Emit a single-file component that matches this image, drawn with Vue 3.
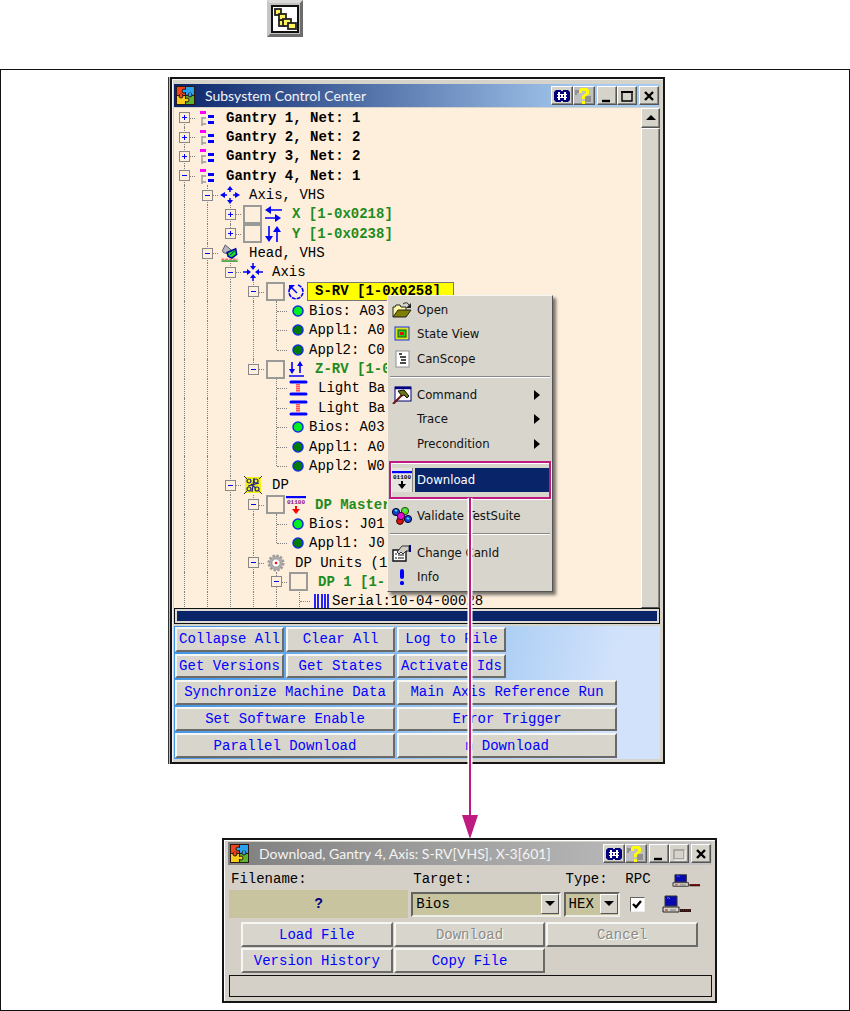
<script setup>
import { ref } from 'vue'

const rows = [
  { g: '', node: '+', icon: 'net', text: 'Gantry 1, Net: 1', kind: 'bold', edge: 'first' },
  { g: '', node: '+', icon: 'net', text: 'Gantry 2, Net: 2', kind: 'bold' },
  { g: '', node: '+', icon: 'net', text: 'Gantry 3, Net: 2', kind: 'bold' },
  { g: '', node: '-', icon: 'net', text: 'Gantry 4, Net: 1', kind: 'bold' },
  { g: '|', node: '-', icon: 'axes', text: 'Axis, VHS' },
  { g: '||', node: '+', check: true, icon: 'leftright', text: 'X [1-0x0218]', kind: 'green' },
  { g: '||', node: '+', check: true, icon: 'updown', text: 'Y [1-0x0238]', kind: 'green', edge: 'last' },
  { g: '|', node: '-', icon: 'head', text: 'Head, VHS' },
  { g: '||', node: '-', icon: 'converge', text: 'Axis' },
  { g: '|||', node: '-', check: true, icon: 'rotate', text: 'S-RV [1-0x0258]', kind: 'picked' },
  { g: '||||', node: 't', icon: 'on', text: 'Bios: A03', tight: true },
  { g: '||||', node: 't', icon: 'off', text: 'Appl1: A0', tight: true },
  { g: '||||', node: 't', icon: 'off', text: 'Appl2: C0', tight: true, edge: 'last' },
  { g: '|||', node: '-', check: true, icon: 'zaxis', text: 'Z-RV [1-0', kind: 'green', edge: 'last' },
  { g: '||| ', node: 't', icon: 'barrier', text: 'Light Ba' },
  { g: '||| ', node: 't', icon: 'barrier', text: 'Light Ba' },
  { g: '||| ', node: 't', icon: 'on', text: 'Bios: A03', tight: true },
  { g: '||| ', node: 't', icon: 'off', text: 'Appl1: A0', tight: true },
  { g: '||| ', node: 't', icon: 'off', text: 'Appl2: W0', tight: true, edge: 'last' },
  { g: '||', node: '-', icon: 'dp', text: 'DP' },
  { g: '|||', node: '-', check: true, icon: 'load', text: 'DP Master', kind: 'green' },
  { g: '||||', node: 't', icon: 'on', text: 'Bios: J01', tight: true },
  { g: '||||', node: 't', icon: 'off', text: 'Appl1: J0', tight: true, edge: 'last' },
  { g: '|||', node: '-', icon: 'gear', text: 'DP Units (1' },
  { g: '||||', node: '-', check: true, text: 'DP 1 [1-', kind: 'green' },
  { g: '|||||', node: 't', icon: 'serial', text: 'Serial:10-04-00028', tight: true }
]

const menu = [
  { icon: 'open', text: 'Open' },
  { icon: 'state', text: 'State View' },
  { icon: 'scope', text: 'CanScope' },
  { sep: true },
  { icon: 'hammer', text: 'Command', sub: true },
  { text: 'Trace', sub: true },
  { text: 'Precondition', sub: true },
  { sep: true },
  { icon: 'loadblack', text: 'Download', active: true },
  { sep: true },
  { icon: 'balls', text: 'Validate TestSuite' },
  { sep: true },
  { icon: 'props', text: 'Change CanId' },
  { icon: 'info', text: 'Info' }
]

const actions = [
  { text: 'Collapse All', place: 'c1' },
  { text: 'Clear All', place: 'c2' },
  { text: 'Log to File', place: 'c3' },
  { text: 'Get Versions', place: 'c1' },
  { text: 'Get States', place: 'c2' },
  { text: 'Activate Ids', place: 'c3' },
  { text: 'Synchronize Machine Data', place: 'left' },
  { text: 'Main Axis Reference Run', place: 'right' },
  { text: 'Set Software Enable', place: 'left' },
  { text: 'Error Trigger', place: 'right' },
  { text: 'Parallel Download', place: 'left' },
  { text: 'n Download', place: 'right' }
]

const target = ref('Bios')
const fileType = ref('HEX')
const rpc = ref(true)
</script>

<template>
  <svg class="defs" aria-hidden="true">
    <symbol id="logo" viewBox="0 0 19 19">
      <rect width="19" height="19" fill="#2a1a12" />
      <rect x="1" y="1" width="8" height="8" fill="#f4431c" />
      <rect x="10" y="1" width="8" height="8" fill="#2aa0f0" />
      <rect x="1" y="10" width="8" height="8" fill="#f7cb1a" />
      <rect x="10" y="10" width="8" height="8" fill="#5cb531" />
      <circle cx="8" cy="5" r="2" fill="#2aa0f0" stroke="#2a1a12" />
      <circle cx="14" cy="9" r="2" fill="#2aa0f0" stroke="#2a1a12" />
      <circle cx="11" cy="14" r="2" fill="#f7cb1a" stroke="#2a1a12" />
      <circle cx="5" cy="10" r="2" fill="#f4431c" stroke="#2a1a12" />
      <path d="M9 4h2v2H9z" fill="#2aa0f0" />
      <path d="M13 7h2v2h-2z" fill="#2aa0f0" />
      <path d="M8 13h2v2H8z" fill="#f7cb1a" />
      <path d="M4 8h2v2H4z" fill="#f4431c" />
    </symbol>
    <symbol id="glasses" viewBox="0 0 18 14">
      <path d="M3 1h5v1h2V1h5l2 2v8l-2 2h-5v-1H8v1H3l-2-2V3z" fill="#00007c" />
      <path d="M5 3h2v8H5zM11 3h2v8h-2zM4 5h4v1H4zM4 8h4v1H4zM10 5h4v1h-4zM10 8h4v1h-4zM8 5h2v4H8z" fill="#fff" />
    </symbol>
    <symbol id="help" viewBox="0 0 18 16">
      <path d="M0 2h4v3H2v2H0zM10 8h6v6h-6z" fill="#909090" />
      <path d="M4 4V2l2-2h6l2 2v4l-4 3v2H7V8l4-3V3H7v2H4zM7 13h3v3H7z" fill="#ffff00" />
    </symbol>
    <symbol id="net" viewBox="0 0 20 18">
      <path d="M5 8v9M5 9h4M5 15h4" stroke="#999" stroke-width="1.4" fill="none" />
      <rect x="3" y="2" width="6" height="3" fill="#ff00ff" />
      <path d="M11 6h6v3h-6zM11 12h6v3h-6z" fill="#0000ff" />
    </symbol>
    <symbol id="axes" viewBox="0 0 20 18">
      <path d="M10 3v3M10 12v3M4 9h3M13 9h3" stroke="#0000ff" stroke-width="1.5" />
      <path d="M10 0l3 4H7zM10 18l3-4H7zM0 9l5-3v6zM20 9l-5-3v6z" fill="#0000ff" />
    </symbol>
    <symbol id="converge" viewBox="0 0 20 18">
      <path d="M10 0v3M10 15v3M0 9h4M16 9h4" stroke="#0000ff" stroke-width="1.5" />
      <path d="M10 7l3-4H7zM10 11l3 4H7zM8 9L4 6v6zM12 9l4-3v6z" fill="#0000ff" />
    </symbol>
    <symbol id="leftright" viewBox="0 0 20 18">
      <path d="M5 5h14M2 13h13" stroke="#0000ff" stroke-width="1.6" />
      <path d="M2 5l6-4v8zM18 13l-6-4v8z" fill="#0000ff" />
    </symbol>
    <symbol id="updown" viewBox="0 0 20 18">
      <path d="M6 1v13M14 4v13" stroke="#0000ff" stroke-width="1.6" />
      <path d="M6 17l-4-6h8zM14 1l-4 6h8z" fill="#0000ff" />
    </symbol>
    <symbol id="zaxis" viewBox="0 0 20 18">
      <path d="M6 2v9M14 4v9M3 16h15" stroke="#0000ff" stroke-width="1.6" />
      <path d="M6 14l-3-5h6zM14 1l-3 5h6z" fill="#0000ff" />
    </symbol>
    <symbol id="rotate" viewBox="0 0 20 18">
      <path d="M12 2a7 7 0 1 1-8 3" stroke="#0000ff" stroke-width="1.6" stroke-dasharray="4 1" fill="none" />
      <path d="M11 10L5 4" stroke="#0000ff" stroke-width="1.5" />
      <path d="M3 2h6L3 8z" fill="#0000ff" />
    </symbol>
    <symbol id="head" viewBox="0 0 20 19">
      <path d="M2 7l3-6 7 6-3 4-6-2z" fill="#b8b8c0" stroke="#505060" />
      <path d="M7 9l9-4 1 6-5 4-4-2z" fill="#20e020" stroke="#0000b0" stroke-width="1.6" />
      <path d="M10 12l5-5" stroke="#0000b0" />
      <path d="M1 16h17" stroke="#ff2020" stroke-dasharray="3 1" />
      <path d="M1 18h17" stroke="#209020" stroke-width="1.5" />
    </symbol>
    <symbol id="on" viewBox="0 0 20 18">
      <circle cx="9" cy="9" r="5" fill="#00f020" stroke="#1030d8" stroke-width="1.5" />
    </symbol>
    <symbol id="off" viewBox="0 0 20 18">
      <circle cx="9" cy="9" r="5" fill="#007a08" stroke="#1030d8" stroke-width="1.5" />
    </symbol>
    <symbol id="barrier" viewBox="0 0 20 18">
      <path d="M2 3h15M2 15h15" stroke="#0000ff" stroke-width="3" stroke-linecap="round" />
      <path d="M8 5v8M10 5v8" stroke="#ff5050" stroke-width="2" stroke-dasharray="1.5 .5" />
    </symbol>
    <symbol id="dp" viewBox="0 0 20 18">
      <path d="M2 1h16v16H2z" fill="#f4f410" />
      <path d="M1 0l3 3M19 0l-3 3M1 18l3-3M19 18l-3-3" stroke="#333" />
      <g stroke="#202090" stroke-width="1.2" fill="none">
        <circle cx="6" cy="5" r="2" />
        <circle cx="13" cy="5" r="2" />
        <circle cx="6" cy="13" r="2" />
        <circle cx="14" cy="13" r="2" />
        <path d="M5 10L16 7M9 16l2-14M8 8l5 4" />
      </g>
    </symbol>
    <symbol id="load" viewBox="0 0 20 18">
      <path d="M0 1h20" stroke="#0000ff" stroke-width="2.4" />
      <text x="1" y="8" font-family="Liberation Mono" font-size="6" font-weight="bold" fill="#8a0a8a">01100</text>
      <path d="M10 10v4" stroke="#f00" stroke-width="2" />
      <path d="M6 13h8l-4 5z" fill="#f00" />
    </symbol>
    <symbol id="loadblack" viewBox="0 0 20 18">
      <path d="M0 1h20" stroke="#0000ff" stroke-width="2.4" />
      <text x="1" y="8" font-family="Liberation Mono" font-size="6" font-weight="bold">01100</text>
      <path d="M10 10v4" stroke="#000" stroke-width="2" />
      <path d="M6 13h8l-4 5z" fill="#000" />
    </symbol>
    <symbol id="gear" viewBox="0 0 20 20">
      <circle cx="10" cy="10" r="8" fill="#b4b0b0" stroke="#a09c9c" stroke-width="3" stroke-dasharray="2.6 1.6" />
      <circle cx="10" cy="10" r="4.6" fill="#fff" stroke="#8a8888" />
      <circle cx="10" cy="10" r="1.5" fill="#f01010" />
    </symbol>
    <symbol id="serial" viewBox="0 0 20 18">
      <path d="M3 2v15M6 2v15M10 2v15M13 2v15M16 2v15" stroke="#0000ff" stroke-width="1.7" />
    </symbol>
    <symbol id="open" viewBox="0 0 20 18">
      <path d="M1 16V6h2l1-2h4l1 2h5v4" fill="#fff8a0" stroke="#222" />
      <path d="M1 16l5-7h13l-5 7z" fill="#808000" stroke="#222" />
      <path d="M11 3q4-3 6 1" fill="none" stroke="#222" />
      <path d="M19 2v5h-5z" fill="#222" />
    </symbol>
    <symbol id="state" viewBox="0 0 20 18">
      <rect x="3" y="2" width="14" height="13" fill="#d8e818" stroke="#2030f0" />
      <rect x="6" y="5" width="8" height="7" fill="#18d818" stroke="#205020" />
      <rect x="8" y="7" width="4" height="3" fill="#f01010" />
    </symbol>
    <symbol id="scope" viewBox="0 0 20 18">
      <rect x="4" y="1" width="13" height="16" fill="#fff" stroke="#909090" />
      <path d="M7 4h3M8 7h6M9 10h5M8 13h6" stroke="#111" stroke-width="1.4" />
    </symbol>
    <symbol id="hammer" viewBox="0 0 20 18">
      <rect x="3" y="1" width="16" height="14" fill="#fff" stroke="#000070" />
      <path d="M3 2h16" stroke="#000080" stroke-width="2.5" />
      <path d="M1 18L11 8" stroke="#6a1a1a" stroke-width="2.2" />
      <path d="M6 5l6-1 5 6-2 2-3-3-2 1z" fill="#6c7414" stroke="#111" />
    </symbol>
    <symbol id="balls" viewBox="0 0 20 18">
      <circle cx="8" cy="14" r="3.4" fill="#e01010" stroke="#300" />
      <circle cx="4" cy="5" r="3.6" fill="#1040d0" stroke="#002" />
      <circle cx="13" cy="4" r="3.6" fill="#60e010" stroke="#151" />
      <circle cx="9" cy="9" r="3.6" fill="#e010d0" stroke="#404" />
      <circle cx="16" cy="12" r="3.6" fill="#1840e0" stroke="#002" />
      <path d="M3 3l2 1M12 3l1 1M15 11l2 1" stroke="#40f0f0" stroke-width="1.8" />
    </symbol>
    <symbol id="props" viewBox="0 0 20 18">
      <path d="M1 6h13v11H1z" fill="#fff" stroke="#111" stroke-width="1.4" />
      <path d="M3 10h2M3 14h2M6 11h6M6 14h6" stroke="#111" stroke-width="1.2" />
      <path d="M5 8l5-6h7v5h-3l-3 3-2-2-2 2z" fill="#d0cdc4" stroke="#333" />
      <path d="M17 1h2v7h-2z" fill="#000090" />
    </symbol>
    <symbol id="info" viewBox="0 0 20 18">
      <rect x="8" y="1" width="4" height="10" rx="2" fill="#0000ff" />
      <rect x="8" y="13" width="4" height="4" rx="1.5" fill="#0000ff" />
    </symbol>
    <symbol id="computer" viewBox="0 0 30 18" preserveAspectRatio="none">
      <path d="M3 1h12v10H3z" fill="#0808b0" stroke="#333" />
      <path d="M5 3q2-1 3 1" stroke="#5080ff" fill="none" />
      <path d="M1 12h16v5H1z" fill="#d8d4cc" stroke="#222" />
      <path d="M3 15h3" stroke="#c01010" />
      <path d="M8 15h6" stroke="#777" />
      <path d="M18 14h11v3H18z" fill="#301010" />
      <path d="M19 15h9" stroke="#d01010" stroke-dasharray="1 1" />
    </symbol>
  </svg>

  <main class="page">
    <header class="tool-row">
      <button class="tool" type="button" aria-label="Subsystem Control Center">
        <svg viewBox="0 0 28 28" width="28" height="28">
          <rect x="1" y="1" width="26" height="26" fill="#fff" stroke="#111" stroke-width="2" />
          <g fill="#fff45a" stroke="#222" stroke-width="1.8">
            <rect x="4" y="4" width="6" height="6" />
            <rect x="8" y="15" width="6" height="6" />
            <rect x="8" y="9" width="7" height="6" />
            <rect x="12" y="14" width="8" height="7" />
            <rect x="17" y="18" width="8" height="6" />
          </g>
        </svg>
      </button>
    </header>

    <section class="figure">
      <section class="window">
        <div class="titlebar">
          <svg class="logo"><use href="#logo" /></svg>
          <h1>Subsystem Control Center</h1>
          <div class="pair">
            <button class="cap" type="button" aria-label="Find"><svg width="18" height="14"><use href="#glasses" /></svg></button>
            <button class="cap grey" type="button" aria-label="Help"><svg width="18" height="16"><use href="#help" /></svg></button>
          </div>
          <div class="pair">
            <button class="cap small" type="button" aria-label="Minimize"><svg width="14" height="14"><path d="M2 12h8" stroke="#000" stroke-width="2.4" /></svg></button>
            <button class="cap small" type="button" aria-label="Maximize"><svg width="14" height="14"><path d="M2 3h10v9H2z" fill="none" stroke="#000" stroke-width="1.4" /><path d="M1 3h12" stroke="#000" stroke-width="2" /></svg></button>
          </div>
          <button class="cap small" type="button" aria-label="Close"><svg width="14" height="14"><path d="M3 3l8 8M11 3l-8 8" stroke="#000" stroke-width="2.4" /></svg></button>
        </div>

        <div class="body">
          <ul class="tree">
            <li v-for="(r, i) in rows" :key="i" class="row">
              <span v-for="(c, k) in r.g.split('')" :key="k" class="cell" :class="{ line: c === '|' }"></span>
              <span class="cell node" :class="r.edge">
                <button v-if="r.node !== 't'" class="expander" :class="{ plus: r.node === '+' }" type="button" :aria-label="'Toggle ' + r.text"></button>
              </span>
              <input v-if="r.check" class="box" type="checkbox" :aria-label="r.text" />
              <svg v-if="r.icon" class="icon"><use :href="'#' + r.icon" /></svg>
              <span class="label" :class="[r.kind, { tight: r.tight }]">{{ r.text }}</span>
            </li>
          </ul>
          <div class="scroll">
            <button class="cap up" type="button" aria-label="Scroll up"><svg width="10" height="6"><path d="M5 0l5 5H0z" /></svg></button>
            <div class="thumb"></div>
          </div>
        </div>

        <div class="progress"><div></div></div>

        <div class="actions">
          <button v-for="a in actions" :key="a.text" class="btn" :class="a.place" type="button">{{ a.text }}</button>
        </div>

        <div class="menu" role="menu">
          <template v-for="(m, i) in menu" :key="i">
            <hr v-if="m.sep" />
            <button v-else class="item" :class="{ active: m.active }" type="button" role="menuitem">
              <span class="slot">
                <svg v-if="m.icon" class="icon"><use :href="'#' + m.icon" /></svg>
              </span>
              <span class="mtext">{{ m.text }}</span>
              <svg v-if="m.sub" class="sub" width="6" height="10"><path d="M0 0l6 5-6 5z" /></svg>
            </button>
          </template>
          <div class="callout"></div>
          <svg class="arrow" width="18" height="342">
            <path d="M9 0v320" stroke="#fff" stroke-width="5" />
            <path d="M9 0v320" stroke="#bf1a80" stroke-width="2" />
            <path d="M1 317h16L9 341z" fill="#bf1a80" />
          </svg>
        </div>
      </section>

      <section class="window dialog">
        <div class="titlebar">
          <svg class="logo"><use href="#logo" /></svg>
          <h2>Download, Gantry 4, Axis: S-RV[VHS], X-3[601]</h2>
          <div class="pair">
            <button class="cap" type="button" aria-label="Find in dialog"><svg width="18" height="14"><use href="#glasses" /></svg></button>
            <button class="cap grey" type="button" aria-label="Dialog help"><svg width="18" height="16"><use href="#help" /></svg></button>
          </div>
          <div class="pair">
            <button class="cap small" type="button" aria-label="Minimize dialog"><svg width="14" height="14"><path d="M2 12h8" stroke="#000" stroke-width="2.4" /></svg></button>
            <button class="cap small" type="button" aria-label="Maximize dialog" disabled><svg width="14" height="14"><path d="M2 3h10v9H2z" fill="none" stroke="#999" stroke-width="1.4" /><path d="M2 13h11V3" fill="none" stroke="#fff" /></svg></button>
          </div>
          <button class="cap small" type="button" aria-label="Close dialog"><svg width="14" height="14"><path d="M3 3l8 8M11 3l-8 8" stroke="#000" stroke-width="2.4" /></svg></button>
        </div>

        <div class="fields">
          <label for="file">Filename:</label>
          <label for="target">Target:</label>
          <label for="type">Type:</label>
          <label for="rpc">RPC</label>
          <svg class="small-pc" width="29" height="13"><use href="#computer" /></svg>
          <input id="file" class="file" type="text" value="?" readonly />
          <div class="combo">
            <select id="target" v-model="target"><option>Bios</option></select>
            <span class="drop"><svg width="10" height="6"><path d="M0 0h10L5 5z" /></svg></span>
          </div>
          <div class="combo">
            <select id="type" v-model="fileType"><option>HEX</option></select>
            <span class="drop"><svg width="10" height="6"><path d="M0 0h10L5 5z" /></svg></span>
          </div>
          <span class="tick">
            <input id="rpc" v-model="rpc" type="checkbox" />
            <svg v-if="rpc" width="10" height="9"><path d="M1 4l3 3 5-6" fill="none" stroke="#000" stroke-width="2.4" /></svg>
          </span>
          <svg width="30" height="18"><use href="#computer" /></svg>
        </div>

        <div class="commands">
          <button class="btn" type="button">Load File</button>
          <button class="btn" type="button" disabled>Download</button>
          <button class="btn" type="button" disabled>Cancel</button>
          <button class="btn" type="button">Version History</button>
          <button class="btn" type="button">Copy File</button>
        </div>
        <div class="status"></div>
      </section>
    </section>
  </main>
</template>

<style>
body {
  background: #fff;
}
</style>

<style scoped>
* {
  box-sizing: border-box;
}

.defs {
  position: absolute;
  width: 0;
  height: 0;
}

.page {
  font: 14px/18px "Liberation Mono", monospace;
  color: #000;
}

button,
input,
select {
  font: inherit;
  margin: 0;
  padding: 0;
  border-radius: 0;
}

svg {
  flex: none;
  display: block;
}

.tool-row {
  height: 69px;
  padding-left: 31.4%;
}

.tool {
  display: grid;
  place-items: center;
  width: 36px;
  height: 37px;
  background: #c4c2c0;
  border: 3px solid;
  border-color: #dcdad8 #6c6c6c #6c6c6c #c8c6c4;
}

.figure {
  display: grid;
  grid-template-columns: 169fr 52fr 443fr 52fr 132fr;
  row-gap: 74px;
  padding: 7px 0;
  border: 1px solid #111;
}

.window {
  position: relative;
  grid-column: 2 / 4;
  padding: 5px 3px 3px 2px;
  background: #d6d3ca;
  border: 2px solid #151515;
  box-shadow: -1px 0 #bbb, -2px 0 #333, inset 1px 1px #f4f4f0;
}

.titlebar {
  display: flex;
  align-items: center;
  gap: 2px;
  height: 23px;
  padding: 0 1px 0 2px;
  color: #f4f4f4;
  background: linear-gradient(90deg, #0a246a, #a6caf0 85%);
}

.logo {
  width: 19px;
  height: 19px;
}

h1,
h2 {
  flex: 1;
  margin: 0 0 0 8px;
  font: 14px/20px Lato, sans-serif;
  white-space: nowrap;
}

.pair {
  display: flex;
}

.cap {
  display: grid;
  place-items: center;
  width: 22px;
  height: 19px;
  background: #d6d3ca;
  border: 1px solid;
  border-color: #fff #555 #555 #fff;
  box-shadow: inset -1px -1px #8a8a86;
}

.cap.grey {
  background: #c0c0c0;
}

.cap.small {
  width: 20px;
}

.body {
  display: flex;
  height: 501px;
  overflow: hidden;
  border-top: 1px solid #d6d3ca;
}

.tree {
  display: flex;
  flex: 1;
  flex-direction: column;
  height: 503px;
  margin: 0;
  padding: 0;
  list-style: none;
  background: #feeedc;
}

.row {
  display: flex;
  flex: 1 1 0;
  align-items: center;
  min-height: 0;
}

.cell {
  position: relative;
  display: grid;
  flex: none;
  place-items: center;
  align-self: stretch;
  width: 22px;
  margin-right: 1px;
}

.line::before,
.node::before {
  position: absolute;
  top: 0;
  bottom: 0;
  left: 10px;
  content: "";
  border-left: 1px dotted #808080;
}

.node::after {
  position: absolute;
  top: 50%;
  left: 11px;
  width: 10px;
  content: "";
  border-top: 1px dotted #808080;
}

.node.first::before {
  top: 50%;
}

.node.last::before {
  bottom: 50%;
}

.expander {
  position: relative;
  z-index: 1;
  width: 11px;
  height: 11px;
  margin-right: 1px;
  background: linear-gradient(#00f, #00f) center / 5px 1px no-repeat #feeedc;
  border: 1px solid #888;
}

.expander.plus {
  background:
    linear-gradient(#00f, #00f) center / 5px 1px no-repeat,
    linear-gradient(#00f, #00f) center / 1px 5px no-repeat #feeedc;
}

.box {
  flex: none;
  width: 19px;
  height: 19px;
  margin-right: 1px;
  appearance: none;
  background: #feeedc;
  border: 2px solid #9a9a98;
}

.icon {
  width: 20px;
  height: 18px;
}

.label {
  margin-left: 9px;
  white-space: pre;
}

.label.tight {
  margin-left: 0;
}

.bold,
.green,
.picked {
  font-weight: bold;
}

.green {
  color: #1e8c22;
}

.label.picked {
  margin-left: 1px;
  padding: 0 12px 0 7px;
  line-height: 17px;
  background: #ff0;
  border: 1px solid #777;
}

.scroll {
  display: flex;
  flex-direction: column;
  width: 19px;
}

.cap.up {
  width: 19px;
  height: 20px;
}

.thumb {
  flex: 1;
  background: #d8d5cc;
  border: 1px solid;
  border-color: #fff #555 #555 #fff;
  box-shadow: inset -1px 0 #8a8a86;
}

.progress {
  padding: 2px;
  background: #dcdad2;
  border: 1px solid #111;
}

.progress div {
  height: 10px;
  background: #0a246a;
}

.actions {
  display: grid;
  grid-template-columns: repeat(4, minmax(0, 109fr)) minmax(0, 41fr);
  grid-auto-rows: 1fr;
  gap: 2px;
  height: 133px;
  margin-top: 2px;
  padding: 1px 0 1px 1px;
  background: linear-gradient(100deg, #3f93e6, #a8ccf4 62%, #d2e2fb 88%);
}

.btn {
  color: #00f;
  white-space: nowrap;
  background: #d8d5cc;
  border: 2px solid;
  border-color: #f6f6f2 #6a6a68 #6a6a68 #f6f6f2;
}

.c1 {
  grid-column: 1;
}

.c2 {
  grid-column: 2;
}

.c3 {
  grid-column: 3;
}

.left {
  grid-column: 1 / 3;
}

.right {
  grid-column: 3 / 5;
}

.btn:disabled {
  color: #8c8a84;
  text-shadow: 1px 1px #fff;
}

.menu {
  position: absolute;
  top: 216px;
  left: 215px;
  z-index: 2;
  display: flex;
  flex-direction: column;
  width: 166px;
  height: 297px;
  padding: 2px;
  background: #d8d5cc;
  border: 1px solid;
  border-color: #f4f4f0 #555 #555 #f4f4f0;
  box-shadow: 3px 3px 3px #77726a;
  font: 13px/18px "DejaVu Sans Condensed", "DejaVu Sans", sans-serif;
}

.item {
  display: flex;
  flex: 24 1 0;
  gap: 2px;
  align-items: center;
  min-height: 0;
  padding: 0 10px 0 2px;
  color: #111;
  text-align: left;
  background: none;
  border: 0;
}

.slot {
  display: flex;
  align-items: center;
  flex: none;
  width: 21px;
}

.mtext {
  flex: 1;
  align-self: stretch;
  display: flex;
  align-items: center;
  padding-left: 2px;
  white-space: nowrap;
}

.item.active {
  padding-right: 0;
}

.active .mtext {
  color: #fff;
  background: #0a246a;
}

.active .slot {
  align-self: stretch;
  background: #e6e4de;
  border-right: 1px solid #888;
}

hr {
  flex: 12 1 0;
  align-self: stretch;
  min-height: 0;
  margin: 0;
  border: 0;
  background: linear-gradient(#888 50%, #fff 50%) center / 100% 2px no-repeat;
}

.callout {
  position: absolute;
  top: 165px;
  left: 1px;
  width: 162px;
  height: 38px;
  border: 2px solid #bf1a80;
  box-shadow: 1px 1px #fff, inset 1px 1px #fff;
}

.arrow {
  position: absolute;
  top: 202px;
  left: 73px;
}

.dialog {
  grid-column: 3 / 5;
  padding: 2px 3px 4px 4px;
  background: #d4d0c8;
  box-shadow: inset 1px 1px #fff;
}

.dialog .titlebar {
  background: linear-gradient(90deg, #808080, #c4c4c4);
}

.fields {
  display: grid;
  grid-template-columns: 180fr 150fr 57fr 36fr 50fr;
  column-gap: 3px;
  align-items: center;
  padding: 5px 0 0 1px;
}

.fields label {
  padding: 0 0 1px 2px;
  line-height: 19px;
}

.small-pc {
  margin-left: 10px;
}

.file {
  width: 100%;
  height: 28px;
  color: #000080;
  font-weight: bold;
  text-align: center;
  background: #c8c4a0;
  border: 0;
}

.combo {
  display: grid;
  grid-template-columns: 1fr 20px;
  align-items: center;
}

.combo select {
  grid-area: 1 / 1 / 2 / 3;
  width: 100%;
  height: 25px;
  padding-left: 3px;
  color: #000;
  appearance: none;
  background: #c8c4a0;
  border: 2px solid;
  border-color: #66645e #f0eee8 #f0eee8 #66645e;
}

.drop {
  display: grid;
  grid-area: 1 / 2 / 2 / 3;
  z-index: 1;
  place-items: center;
  width: 18px;
  height: 20px;
  pointer-events: none;
  background: #d6d3ca;
  border: 1px solid;
  border-color: #fff #555 #555 #fff;
}

.tick {
  display: grid;
  justify-items: center;
  align-items: center;
  width: 16px;
  margin-left: 6px;
}

.tick input {
  grid-area: 1 / 1;
  width: 15px;
  height: 15px;
  appearance: none;
  background: #fff;
  border: 1px solid;
  border-color: #66645e #f0eee8 #f0eee8 #66645e;
}

.tick svg {
  grid-area: 1 / 1;
  pointer-events: none;
}

.commands {
  display: grid;
  grid-template-columns: repeat(3, 1fr);
  grid-auto-rows: 25px;
  gap: 1px;
  padding: 4px 14px 0 13px;
}

.status {
  height: 22px;
  margin: 2px 0 0 1px;
  border: 1px solid #111;
}
</style>
